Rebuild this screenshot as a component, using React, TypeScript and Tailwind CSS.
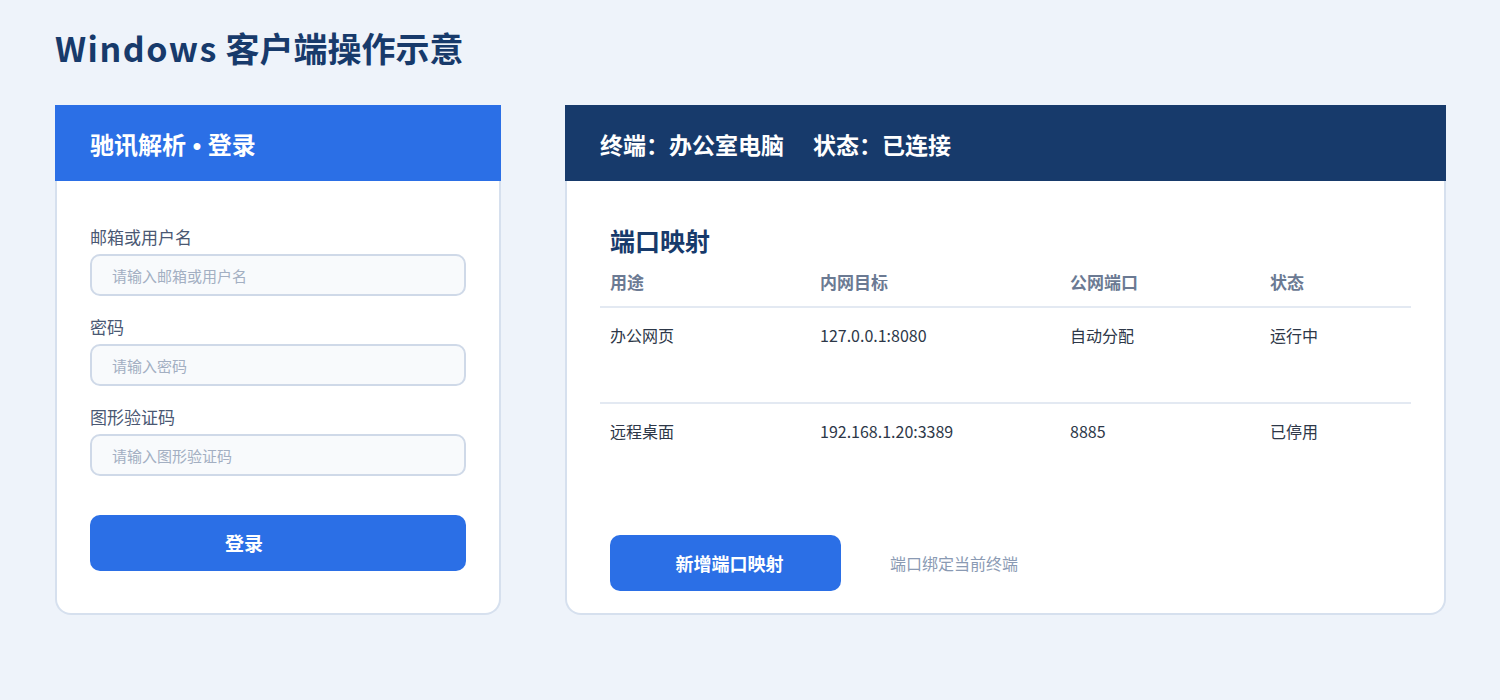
const font = { fontFamily: '"Noto Sans CJK SC", "Noto Sans", sans-serif' };

const fields = [
  { label: '邮箱或用户名', placeholder: '请输入邮箱或用户名' },
  { label: '密码', placeholder: '请输入密码' },
  { label: '图形验证码', placeholder: '请输入图形验证码' },
];

const rows = [
  { use: '办公网页', target: '127.0.0.1:8080', port: '自动分配', status: '运行中' },
  { use: '远程桌面', target: '192.168.1.20:3389', port: '8885', status: '已停用' },
];

export default function App() {
  return (
    <div className="min-h-[700px] w-full bg-[#eef3fa] px-[55px] pt-[26px]" style={font}>
      <h1 className="text-[34px] leading-[44px] font-bold text-[#173a6b] mb-[35px]">
        <span className="tracking-[1.5px]">Windows</span> 客户端操作示意
      </h1>

      <div className="grid grid-cols-[446px_881px] gap-16">
        {/* login card */}
        <div className="flex flex-col">
          <div className="h-[76px] bg-[#2b6fe6] flex items-center px-[35px] pt-[3px]">
            <h2 className="text-[24px] font-bold text-white">
              驰讯解析<span className="font-['Liberation_Sans',sans-serif]"> • </span>登录
            </h2>
          </div>
          <div className="flex-1 bg-white border-2 border-t-0 border-[#d6e0ee] rounded-b-2xl px-[33px] pt-[44px] pb-[42px]">
            <div className="flex flex-col gap-[19px]">
              {fields.map(f => (
                <div key={f.label} className="flex flex-col gap-[5px]">
                  <label className="text-[17px] leading-6 text-[#4a5873]">{f.label}</label>
                  <input
                    type="text"
                    placeholder={f.placeholder}
                    className="h-[42px] w-full rounded-[10px] border-2 border-[#cfd9e8] bg-[#f8fafc] px-5 text-[15px] text-[#2d3748] placeholder:text-[#a3afc2] outline-none"
                  />
                </div>
              ))}
            </div>
            <button className="mt-[39px] h-[56px] w-full rounded-[10px] bg-[#2b6fe6] pr-[68px] text-[19px] font-bold text-white">登录</button>
          </div>
        </div>

        {/* terminal card */}
        <div className="flex flex-col">
          <div className="h-[76px] bg-[#173a6b] flex items-center gap-[29px] px-[35px] pt-[3px] text-[23px] font-bold text-white">
            <span>终端：办公室电脑</span>
            <span>状态：已连接</span>
          </div>
          <div className="flex-1 bg-white border-2 border-t-0 border-[#d6e0ee] rounded-b-2xl px-[33px] pt-[43px] pb-[22px]">
            <h2 className="px-[10px] text-[25px] leading-8 font-bold text-[#173a6b]">端口映射</h2>
            <table className="w-[811px] table-fixed text-left">
              <colgroup>
                <col className="w-[210px]" />
                <col className="w-[250px]" />
                <col className="w-[200px]" />
                <col />
              </colgroup>
              <thead>
                <tr className="border-b-2 border-[#e3e9f2]">
                  {['用途', '内网目标', '公网端口', '状态'].map(h => (
                    <th key={h} className="px-[10px] pt-[14px] pb-[12px] text-[17px] leading-6 font-bold text-[#6b7a93]">{h}</th>
                  ))}
                </tr>
              </thead>
              <tbody>
                {rows.map((r, i) => (
                  <tr key={r.use} className={i === 0 ? 'border-b-2 border-[#e3e9f2]' : ''}>
                    {[r.use, r.target, r.port, r.status].map((c, j) => (
                      <td key={j} className={`${i === 0 ? 'h-[96px]' : 'h-[94px]'} align-top px-[10px] pt-4 text-[16px] leading-[22px] text-[#2d3748]`}>{c}</td>
                    ))}
                  </tr>
                ))}
              </tbody>
            </table>
            <div className="mt-[38px] flex items-center gap-[49px] px-[10px]">
              <button className="h-[56px] w-[231px] rounded-[10px] bg-[#2b6fe6] pl-2 text-[18px] font-bold text-white">新增端口映射</button>
              <span className="text-[16px] text-[#8a9ab3]">端口绑定当前终端</span>
            </div>
          </div>
        </div>
      </div>
    </div>
  );
}
